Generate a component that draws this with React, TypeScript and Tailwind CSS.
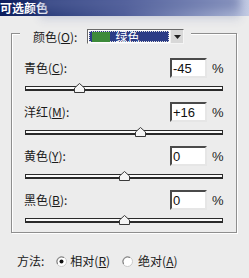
import React from "react";

const cjk = { fontFamily: '"Noto Sans CJK SC", "Noto Sans", sans-serif' };
const lat = { fontFamily: '"Liberation Sans", Arial, sans-serif' };

function Thumb({ pos }: { pos: number }) {
  return (
    <svg
      className="absolute top-0"
      style={{ left: pos - 5 }}
      width="11"
      height="10"
      viewBox="0 0 11 10"
    >
      <path d="M0.5 9.5 L0.5 5 L5.5 0.5 L10.5 5 L10.5 9.5 Z" fill="#f4f4f4" stroke="#3a3a3a" strokeWidth="1" />
    </svg>
  );
}

function Row({ label, u, rest, value, v }: { label: string; u: string; rest: string; value: string; v: number }) {
  const pos = 99 + (99 * v) / 100;
  return (
    <div className="flex flex-col">
      <div className="flex items-center h-[20px] pl-[12px] pr-[12px]">
        <div className="flex-1 text-[12px] leading-none text-[#1a1a1a]" style={cjk}>
          {label}(<span className="underline">{u}</span>){rest}
        </div>
        <div
          className="w-[37px] h-[20px] bg-white border-2 border-t-[#4a4a4a] border-l-[#4a4a4a] border-r-[#e6e6e6] border-b-[#e6e6e6] flex items-center pl-[1px] text-[13px] leading-none text-[#111]"
          style={lat}
        >
          {value}
        </div>
        <div className="ml-[5px] w-[12px] text-[13px] leading-none text-[#222]" style={lat}>
          %
        </div>
      </div>
      <div className="relative ml-[13px] w-[198px] h-[10px] mt-[5px] mb-[9px]">
        <div className="absolute left-0 right-0 top-[3px] h-[5px] border border-[#2a2a2a] border-b-2 bg-[#fafafa]" />
        <Thumb pos={pos} />
      </div>
    </div>
  );
}

function Radio({ checked }: { checked: boolean }) {
  return (
    <svg width="11" height="11" viewBox="0 0 11 11">
      <circle cx="5.5" cy="5.5" r="5" fill="#fff" stroke="#c8c8c8" />
      <path d="M1.5 8 A4.8 4.8 0 0 1 8 1.5" fill="none" stroke="#777" strokeWidth="1" />
      {checked && <circle cx="5.5" cy="5.5" r="2" fill="#111" />}
    </svg>
  );
}

export default function App() {
  return (
    <div className="relative w-[249px] h-[278px] bg-[#ececec] overflow-hidden">
      <div className="h-[16px] bg-gradient-to-r from-[#0c1e5e] via-[#4e5c98] to-[#c4cce4] flex items-center">
        <span className="text-white font-bold text-[12px] leading-none" style={cjk}>
          可选颜色
        </span>
      </div>
      <div className="pointer-events-none absolute left-[40px] top-[-4px] w-[200px] h-[26px] bg-gradient-to-b from-[#5a68a0] to-transparent blur-[5px] opacity-80" />

      <div className="ml-[11px] mt-[17px] w-[226px] h-[200px] border border-[#8e8e8e] shadow-[1px_1px_0_#ffffff,inset_1px_1px_0_#ffffff] flex flex-col">
        <div className="-mt-[5px] ml-[8px] w-fit pl-[13px] pr-[7px] bg-[#ececec] flex items-center h-[15px]">
          <span className="text-[12px] leading-none text-[#1a1a1a]" style={cjk}>
            颜色(<span className="underline">O</span>):
          </span>
          <div className="ml-[10px] w-[97px] h-[15px] bg-white border border-t-[#6a6a6a] border-l-[#6a6a6a] border-r-[#f4f4f4] border-b-[#f4f4f4] flex items-stretch">
            <div className="flex-1 m-[1px] bg-[#2c3c86] border border-dotted border-[#ddd] flex items-center pl-[2px]">
              <div className="w-[18px] h-[10px] bg-[#3d8a3a]" />
              <span className="ml-[5px] text-[12px] leading-none text-white" style={cjk}>
                绿色
              </span>
            </div>
            <div className="w-[13px] bg-[#d8d8d8] border-l border-[#f0f0f0] flex items-center justify-center">
              <svg width="7" height="4" viewBox="0 0 7 4">
                <path d="M0 0 H7 L3.5 4 Z" fill="#222" />
              </svg>
            </div>
          </div>
        </div>
        <div className="mt-[14px] flex flex-col">
          <Row label="青色" u="C" rest=":" value="-45" v={-45} />
          <Row label="洋红" u="M" rest=":" value="+16" v={16} />
          <Row label="黄色" u="Y" rest=":" value="0" v={0} />
          <Row label="黑色" u="B" rest=":" value="0" v={0} />
        </div>
      </div>

      <div className="ml-[17px] mt-[20px] flex items-center h-[16px] text-[12px] leading-none text-[#1a1a1a]" style={cjk}>
        <span>方法:</span>
        <span className="ml-[12px] flex items-center">
          <Radio checked />
        </span>
        <span className="ml-[3px]">
          相对(<span className="underline">R</span>)
        </span>
        <span className="ml-[12px] flex items-center">
          <Radio checked={false} />
        </span>
        <span className="ml-[5px]">
          绝对(<span className="underline">A</span>)
        </span>
      </div>
    </div>
  );
}
